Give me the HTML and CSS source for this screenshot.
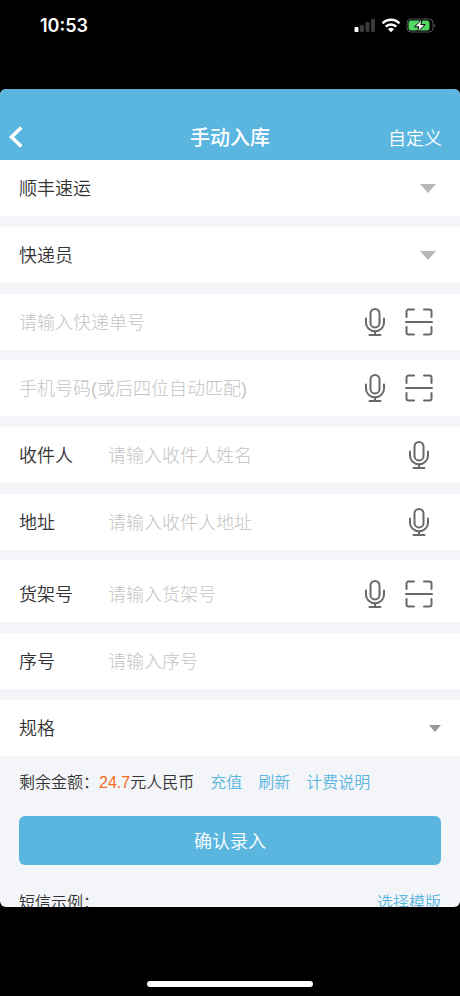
FILE: index.html
```
<!DOCTYPE html>
<html lang="zh-CN">
<head>
<meta charset="utf-8">
<meta name="viewport" content="width=device-width, initial-scale=1">
<title>手动入库</title>
<link rel="stylesheet" href="styles.css">
</head>
<body>

<!-- icons used more than once -->
<svg class="sprite" aria-hidden="true">
	<symbol id="mic" viewBox="0 0 28 28">
		<rect x="9.5" y="1" width="9" height="18.4" rx="4.5"/>
		<path d="M5 10.5v4.2a9 8.5 0 0 0 18 0v-4.2M14 23.2v3.6M8.500 26.900h11"/>
	</symbol>
	<symbol id="scan" viewBox="0 0 28 28">
		<path d="M1.5 9V3.5a2 2 0 0 1 2-2H9M19 1.5h5.500a2 2 0 0 1 2 2V9M26.500 19v5.500a2 2 0 0 1-2 2H19M9 26.500H3.500a2 2 0 0 1-2-2V19M1 14h26"/>
	</symbol>
</svg>

<div class="phone">
	<div class="status">
		<span class="time">10:53</span>
		<svg class="signal" viewBox="0 0 82 18" aria-hidden="true">
			<rect x="0.500" y="10" width="4" height="5" rx="1" fill="#fff"/>
			<g fill="#3a3a3a">
				<rect x="6" y="8" width="4" height="7" rx="1"/>
				<rect x="11.500" y="5" width="4" height="10" rx="1"/>
				<rect x="17" y="2" width="4" height="13" rx="1"/>
			</g>
			<g fill="none" stroke="#fff" stroke-width="2.500">
				<path d="M28.600 6.300a11.800 11.800 0 0 1 16.800 0"/>
				<path d="M31.700 9.600a7.500 7.500 0 0 1 10.600 0"/>
			</g>
			<path d="M37 15.200l-3-3a4.300 4.300 0 0 1 6 0z" fill="#fff"/>
			<rect x="53" y="2" width="26" height="13" rx="4" fill="none" stroke="#555"/>
			<rect x="54.500" y="3.500" width="21" height="10" rx="2.500" fill="#4fd663"/>
			<path d="M80.200 6.500a2.600 2.600 0 0 1 0 4z" fill="#666"/>
			<path d="M68.200 2.200L60.500 9.800h4.300l-1.500 5.400 7.900-7.600h-4.400z" fill="#fff" stroke="#000" stroke-width="1"/>
		</svg>
	</div>

	<main class="app">
		<header class="bar">
			<button type="button" class="back" aria-label="返回">
				<svg viewBox="0 0 14 22"><path d="M12.300 1.500L2.500 11l9.800 9.500"/></svg>
			</button>
			<h1>手动入库</h1>
			<a href="#" class="custom">自定义</a>
		</header>

		<form>
			<div class="group">
				<div class="row pick">
					<select aria-label="快递公司"><option>顺丰速运</option></select>
					<span class="arrow"></span>
				</div>
				<div class="row pick">
					<select aria-label="快递员"><option>快递员</option></select>
					<span class="arrow"></span>
				</div>
				<div class="row">
					<input type="text" aria-label="快递单号" placeholder="请输入快递单号">
					<button type="button" class="icon" aria-label="语音输入"><svg><use href="#mic"/></svg></button>
					<button type="button" class="icon" aria-label="扫描"><svg><use href="#scan"/></svg></button>
				</div>
			</div>

			<div class="group">
				<div class="row">
					<input type="text" aria-label="手机号码" placeholder="手机号码(或后四位自动匹配)">
					<button type="button" class="icon" aria-label="语音输入"><svg><use href="#mic"/></svg></button>
					<button type="button" class="icon" aria-label="扫描"><svg><use href="#scan"/></svg></button>
				</div>
				<div class="row">
					<label for="name">收件人</label>
					<input type="text" id="name" placeholder="请输入收件人姓名">
					<button type="button" class="icon" aria-label="语音输入"><svg><use href="#mic"/></svg></button>
				</div>
				<div class="row">
					<label for="address">地址</label>
					<input type="text" id="address" placeholder="请输入收件人地址">
					<button type="button" class="icon" aria-label="语音输入"><svg><use href="#mic"/></svg></button>
				</div>
			</div>

			<div class="group">
				<div class="row shelf">
					<label for="shelf">货架号</label>
					<input type="text" id="shelf" placeholder="请输入货架号">
					<button type="button" class="icon" aria-label="语音输入"><svg><use href="#mic"/></svg></button>
					<button type="button" class="icon" aria-label="扫描"><svg><use href="#scan"/></svg></button>
				</div>
				<div class="row">
					<label for="number">序号</label>
					<input type="text" id="number" placeholder="请输入序号">
				</div>
				<div class="row pick spec">
					<select aria-label="规格"><option>规格</option></select>
					<span class="arrow"></span>
				</div>
			</div>

			<div class="balance">
				<span>剩余金额：<span class="money">24.7</span>元人民币</span>
				<a href="#">充值</a>
				<a href="#">刷新</a>
				<a href="#">计费说明</a>
			</div>
			<button type="submit" class="submit">确认录入</button>
			<div class="sms">
				<span>短信示例：</span>
				<a href="#">选择模版</a>
			</div>
		</form>
	</main>

	<div class="bottom"><div class="home"></div></div>
</div>
</body>
</html>
```

FILE: styles.css
```
* {
	box-sizing: border-box;
}
body {
	margin: 0;
	background: #000;
	color: #333;
	font-family: "Liberation Sans", "Noto Sans CJK SC", sans-serif;
	font-size: 18px;
	font-weight: 350;
}
a {
	color: #5ab6df;
	text-decoration: none;
}
button, input, select {
	margin: 0;
	padding: 0;
	border: 0;
	background: none;
	color: inherit;
	font: inherit;
}
.sprite {
	display: none;
}
.phone {
	display: flex;
	flex-direction: column;
	height: 100vh;
}

/* status bar */
.status {
	display: flex;
	flex: none;
	justify-content: space-between;
	align-items: flex-start;
	height: 89px;
	padding: 17px 24px 0 40px;
	color: #fff;
}
.time {
	font-family: Inter, sans-serif;
	font-size: 18px;
	font-weight: 600;
	line-height: 18px;
}
.signal {
	width: 82px;
	height: 18px;
}

.app {
	flex: 1;
	min-height: 0;
	overflow: hidden;
	border-radius: 6px;
	background: #f3f5f8;
}

/* title bar */
.bar {
	display: grid;
	grid-template-columns: 1fr auto 1fr;
	align-items: center;
	height: 71px;
	padding: 24px 9px 0;
	background: #5ab6df;
	color: #fff;
}
.bar h1 {
	margin: 0;
	font-size: 20px;
	font-weight: 500;
}
.back svg {
	display: block;
	width: 14px;
	height: 22px;
	fill: none;
	stroke: #fff;
	stroke-width: 3.5;
}
.custom {
	justify-self: end;
	margin-right: 9px;
	color: #fff;
}

/* form rows */
.group {
	display: flex;
	flex-direction: column;
	gap: 11px;
	margin-bottom: 10px;
}
.row {
	display: flex;
	align-items: center;
	gap: 16px;
	height: 56px;
	padding: 0 27px 0 19px;
	background: #fff;
}
.shelf {
	height: 62px;
	padding-top: 6px;
}
.row label {
	width: 73px;
	padding-bottom: 2px;
}
.row input, .row select {
	flex: 1;
	min-width: 0;
	height: 40px;
	padding-top: 2px;
	outline: 0;
}
.row select {
	appearance: none;
}
.row input::placeholder {
	color: #c4c4c4;
	font-weight: 300;
	opacity: 1;
}
.icon {
	width: 28px;
	height: 28px;
}
.icon svg {
	display: block;
	width: 28px;
	height: 28px;
	fill: none;
	stroke: #696969;
	stroke-width: 2;
	stroke-linecap: round;
}
.pick {
	padding-right: 24px;
}
.arrow {
	border: 8px solid transparent;
	border-top: 9px solid #b8b8b8;
	border-bottom: 0;
}
.spec {
	padding-right: 19px;
}
.spec .arrow {
	border-width: 7px 6px 0;
	border-top-color: #999;
}

/* balance and submit */
.balance, .sms {
	display: flex;
	gap: 16px;
	padding: 0 19px;
	font-size: 16px;
	line-height: 24px;
}
.balance {
	margin-top: 15px;
}
.group:last-of-type {
	margin-bottom: 0;
}
.money {
	color: #f36c21;
}
.submit {
	display: block;
	width: calc(100% - 38px);
	height: 49px;
	margin: 21px 19px 26px;
	padding-bottom: 2px;
	border-radius: 6px;
	background: #5ab6df;
	color: #fff;
}
.sms {
	justify-content: space-between;
}

/* home indicator */
.bottom {
	display: flex;
	flex: none;
	justify-content: center;
	align-items: flex-end;
	height: 89px;
	padding-bottom: 9px;
}
.home {
	width: 36%;
	height: 6px;
	border-radius: 3px;
	background: #fff;
}
```
